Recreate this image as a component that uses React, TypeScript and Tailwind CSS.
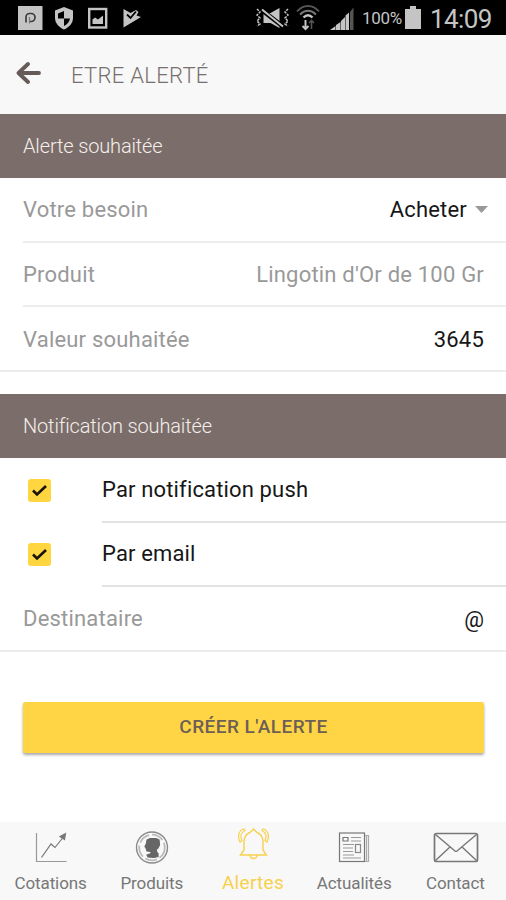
import type { ReactNode } from "react";

function StatusBar() {
  return (
    <div className="flex h-[35px] items-center justify-between bg-black pr-[14px] pl-[18px] text-[#c4c4c4]">
      <svg width="124" height="35" viewBox="18 0 124 35" fill="currentColor">
        <rect x="18" y="6" width="24.500" height="24" />
        <path
          d="M26 22.500v-5.500a3.500 3.500 0 0 1 3.500-3.500h1.500a4 4 0 0 1 0 8h-2"
          fill="none"
          stroke="#3d3d3d"
          strokeWidth="1.700"
        />
        <path d="M29.500 17v6.500" stroke="#777" strokeWidth="1.200" />
        <path d="M64 7l9 3.500v7.500c0 5-4 9.500-9 11.500c-5-2-9-6.500-9-11.500v-7.500z" />
        <path d="M64 11v7.500h-6v-5z M64 18.500h6c-.5 3.500-3 6-6 7.500z" fill="#000" />
        <rect x="89.200" y="9" width="17" height="18.500" fill="none" stroke="currentColor" strokeWidth="2.400" />
        <path d="M92.500 24v-4.500l2.500-2 3 2 5-4v8.500z" />
        <path d="M123.500 9l7 4 5.500-3 2.500 2-2 3.500 4.500 1.500-17.500 10.500z" />
        <path d="M127 14.500l3.500 3.500 5.500-6.500" fill="none" stroke="#000" strokeWidth="1.800" />
      </svg>
      <div className="flex items-center">
        <svg width="98" height="35" viewBox="256 0 98 35" fill="none" stroke="currentColor">
          <path d="M263.500 13h7l9-5v20l-9-5h-7z" fill="currentColor" stroke="none" />
          <path d="M261 9.500l22 17" stroke="#000" strokeWidth="4.500" />
          <path d="M262 9.500l21 17" strokeWidth="2" />
          <path d="M257 9l3 3-3 3 3 3-3 3 3 3-3 2M288 9l-3 3 3 3-3 3 3 3-3 3 3 2" strokeWidth="1.500" strokeDasharray="2.500 1" />
          <path d="M297 11.500c6-7.500 16-7.500 22 0" stroke="#555" strokeWidth="2" />
          <path d="M300 14.500c5-5 11-5 16 0" stroke="#777" strokeWidth="2" />
          <path d="M303.500 17.500c3-3 6-3 9 0" strokeWidth="2.400" />
          <path d="M305.500 20v9M302.500 26l3 3 3-3" strokeWidth="2" />
          <path d="M311.500 29v-8M309 23l2.500-2.500 2.500 2.500" stroke="#555" strokeWidth="1.600" />
          <g stroke="none" fill="currentColor">
            <path d="M330 30l5.500-4v4zM336 25l4.500-3v8H336zM341 21l4-4v13h-4zM345.500 15.500l3.500-3v17.500h-3.500z" />
            <path d="M350 12l3.500-4.500V30H350z" fill="#555" />
          </g>
        </svg>
        <span className="ml-2 w-[43px] pt-[3px] text-[17px] tracking-[-0.3px] whitespace-nowrap">100%</span>
        <svg width="16" height="24" viewBox="0 0 16 24" fill="currentColor">
          <path d="M5 0h6v3h5v20H0V3h5z" />
        </svg>
        <span className="ml-[9px] w-[62px] pt-[3px] text-[26px] leading-none tracking-[-0.6px]">14:09</span>
      </div>
    </div>
  );
}

function SectionTitle({ children }: { children: ReactNode }) {
  return (
    <h2 className="flex h-16 items-center bg-[#7b6d69] px-[23px] pb-px text-[20px] font-light tracking-[-0.15px] text-[#f4efed]">
      {children}
    </h2>
  );
}

function CheckRow({ label }: { label: string }) {
  return (
    <label className="flex h-[64.5px] items-center pl-[28px] text-[22px]">
      <span className="flex size-[23px] items-center justify-center rounded-[3px] bg-[#ffd540]">
        <svg width="15" height="13" viewBox="0 0 15 13" fill="none" stroke="#16140a" strokeWidth="2.600">
          <path d="M1 6.500l4 4L14 2" />
        </svg>
      </span>
      <span className="ml-[51px] flex h-full flex-1 items-center border-b-2 border-[#e2e2e2] tracking-[0.15px]">
        {label}
      </span>
    </label>
  );
}

const tabs = [
  {
    name: "Cotations",
    icon: (
      <>
        <path d="M10.500 3v28.500h30" stroke="#999" />
        <path d="M15.500 27.500l9.500-13.500 4 3.500 8-10" />
        <path d="M39.500 3.500l-1 6-4.500-3z" fill="currentColor" />
      </>
    ),
  },
  {
    name: "Produits",
    icon: (
      <>
        <circle cx="25" cy="17.500" r="15.500" stroke="#8a8a8a" strokeWidth="1.400" />
        <circle cx="25" cy="17.500" r="12.800" stroke="#bbb" strokeWidth="1.800" strokeDasharray="12 3" />
        <path
          d="M20 10l3-1.500h6l3 1.500 .5 5-1.500 3-1.500 1v3l1.500 1.500v3l-4 1-6-.5-1-2 4-1.500v-2l-4-.5-1-3-1-1.500 1.500-3z"
          fill="#666"
          stroke="#666"
        />
      </>
    ),
  },
  {
    name: "Alertes",
    icon: (
      <>
        <path
          d="M12.500 29l3.500-5v-8c0-5 2-8 6-9.500l3.500-3.500 3.500 3.500c4 1.500 6 4.500 6 9.500v8l3.500 5zM22 29.500c.5 4 6.500 4 7 0"
          strokeWidth="1.400"
        />
        <path
          d="M16 3c-5 1-7 7-4 13l2-1.500c-2-4-1-8 3-10zM35 3c5 1 7 7 4 13l-2-1.500c2-4 1-8-3-10z"
          strokeWidth="1.200"
        />
      </>
    ),
  },
  {
    name: "Actualités",
    icon: (
      <>
        <rect x="10.500" y="3" width="25" height="28.500" />
        <path d="M36 5.500h3.500v26H36M37.500 6v25" stroke="#aaa" />
        <path d="M14 7.500h5v3.500h-5z" />
        <path d="M22 7.500h10M22 11h10M14 14.500h11M14 18h10M14 21.500h10M14 25h11M14 28h18" stroke="#999" />
        <rect x="26.500" y="14.500" width="5" height="8" fill="#f8f8f8" stroke="#888" />
      </>
    ),
  },
  {
    name: "Contact",
    icon: (
      <>
        <rect x="4.500" y="3.500" width="43" height="28" rx="2" strokeWidth="1.700" />
        <path d="M5.500 4.500L25 21q1 .8 2 0L46.500 4.500M5.500 30.500l15-14M46.500 30.500l-15-14" strokeWidth="1.400" />
      </>
    ),
  },
];

export default function App() {
  return (
    <main className="flex h-[900px] w-[506px] flex-col overflow-hidden bg-white font-['Roboto',sans-serif] text-[#171717]">
      <StatusBar />

      <header className="flex h-[79px] items-center bg-[#f8f8f8] pl-[16px] text-[#665b58]">
        <svg
          width="26"
          height="24"
          viewBox="0 0 26 24"
          fill="none"
          stroke="currentColor"
          strokeWidth="3.800"
          strokeLinecap="round"
          strokeLinejoin="round"
          className="mb-[3px]"
        >
          <path d="M12 3L2.500 12l9.500 9M3 12h20" />
        </svg>
        <h1 className="ml-[29px] pt-[2px] text-[22px] font-light tracking-[0.3px] text-[#77706e]">ETRE ALERTÉ</h1>
      </header>

      <section>
        <SectionTitle>Alerte souhaitée</SectionTitle>
        <div className="text-[22px]">
          <div className="ml-[23px] flex h-[64.5px] items-center justify-between border-b-2 border-[#ececec] pr-[18px]">
            <span className="tracking-[0.2px] text-[#999]">Votre besoin</span>
            <span className="flex items-center gap-[8px] tracking-[0.2px]">
              Acheter
              <svg width="13" height="7" viewBox="0 0 13 7" fill="#999">
                <path d="M0 0h13L6.500 7z" />
              </svg>
            </span>
          </div>
          <div className="ml-[23px] flex h-[64.5px] items-center justify-between border-b-2 border-[#ececec] pt-px pr-[22px] tracking-[0.2px] text-[#999]">
            <span>Produit</span>
            <span>Lingotin d'Or de 100 Gr</span>
          </div>
          <div className="flex h-[65px] items-center justify-between border-b-2 border-[#ececec] pt-px pr-[22px] pl-[23px] tracking-[0.2px]">
            <span className="text-[#999]">Valeur souhaitée</span>
            <span>3645</span>
          </div>
        </div>
      </section>

      <section className="mt-[22px]">
        <SectionTitle>Notification souhaitée</SectionTitle>
        <CheckRow label="Par notification push" />
        <CheckRow label="Par email" />
        <div className="flex h-[65px] items-center justify-between border-b-2 border-[#ececec] pr-[22px] pl-[23px] text-[22px]">
          <span className="tracking-[0.2px] text-[#999]">Destinataire</span>
          <span className="pt-[2px]">@</span>
        </div>
      </section>

      <button className="mr-[22px] ml-[23px] mt-[50px] h-[51px] rounded-[2px] bg-[#ffd545] pb-px text-[19px] font-medium tracking-[0.45px] text-[#6d5f55] shadow-[0_2px_3px_rgba(0,0,0,0.35)]">
        CRÉER L'ALERTE
      </button>

      <nav className="mt-auto grid h-[78px] grid-cols-5 bg-[#f8f8f8]">
        {tabs.map((tab) => (
          <a
            key={tab.name}
            className={
              tab.name === "Alertes"
                ? "flex flex-col items-center pt-[4px] text-[19px] tracking-[0.3px] text-[#f7d04c]"
                : "flex flex-col items-center pt-[8px] text-[17px] tracking-[-0.1px] text-[#777]"
            }
          >
            <svg width="50" height="36" viewBox="0 0 50 36" fill="none" stroke="currentColor" strokeWidth="1.200">
              {tab.icon}
            </svg>
            <span className={tab.name === "Alertes" ? "mt-[9px] leading-6" : "mt-[5px] leading-6"}>{tab.name}</span>
          </a>
        ))}
      </nav>
    </main>
  );
}
